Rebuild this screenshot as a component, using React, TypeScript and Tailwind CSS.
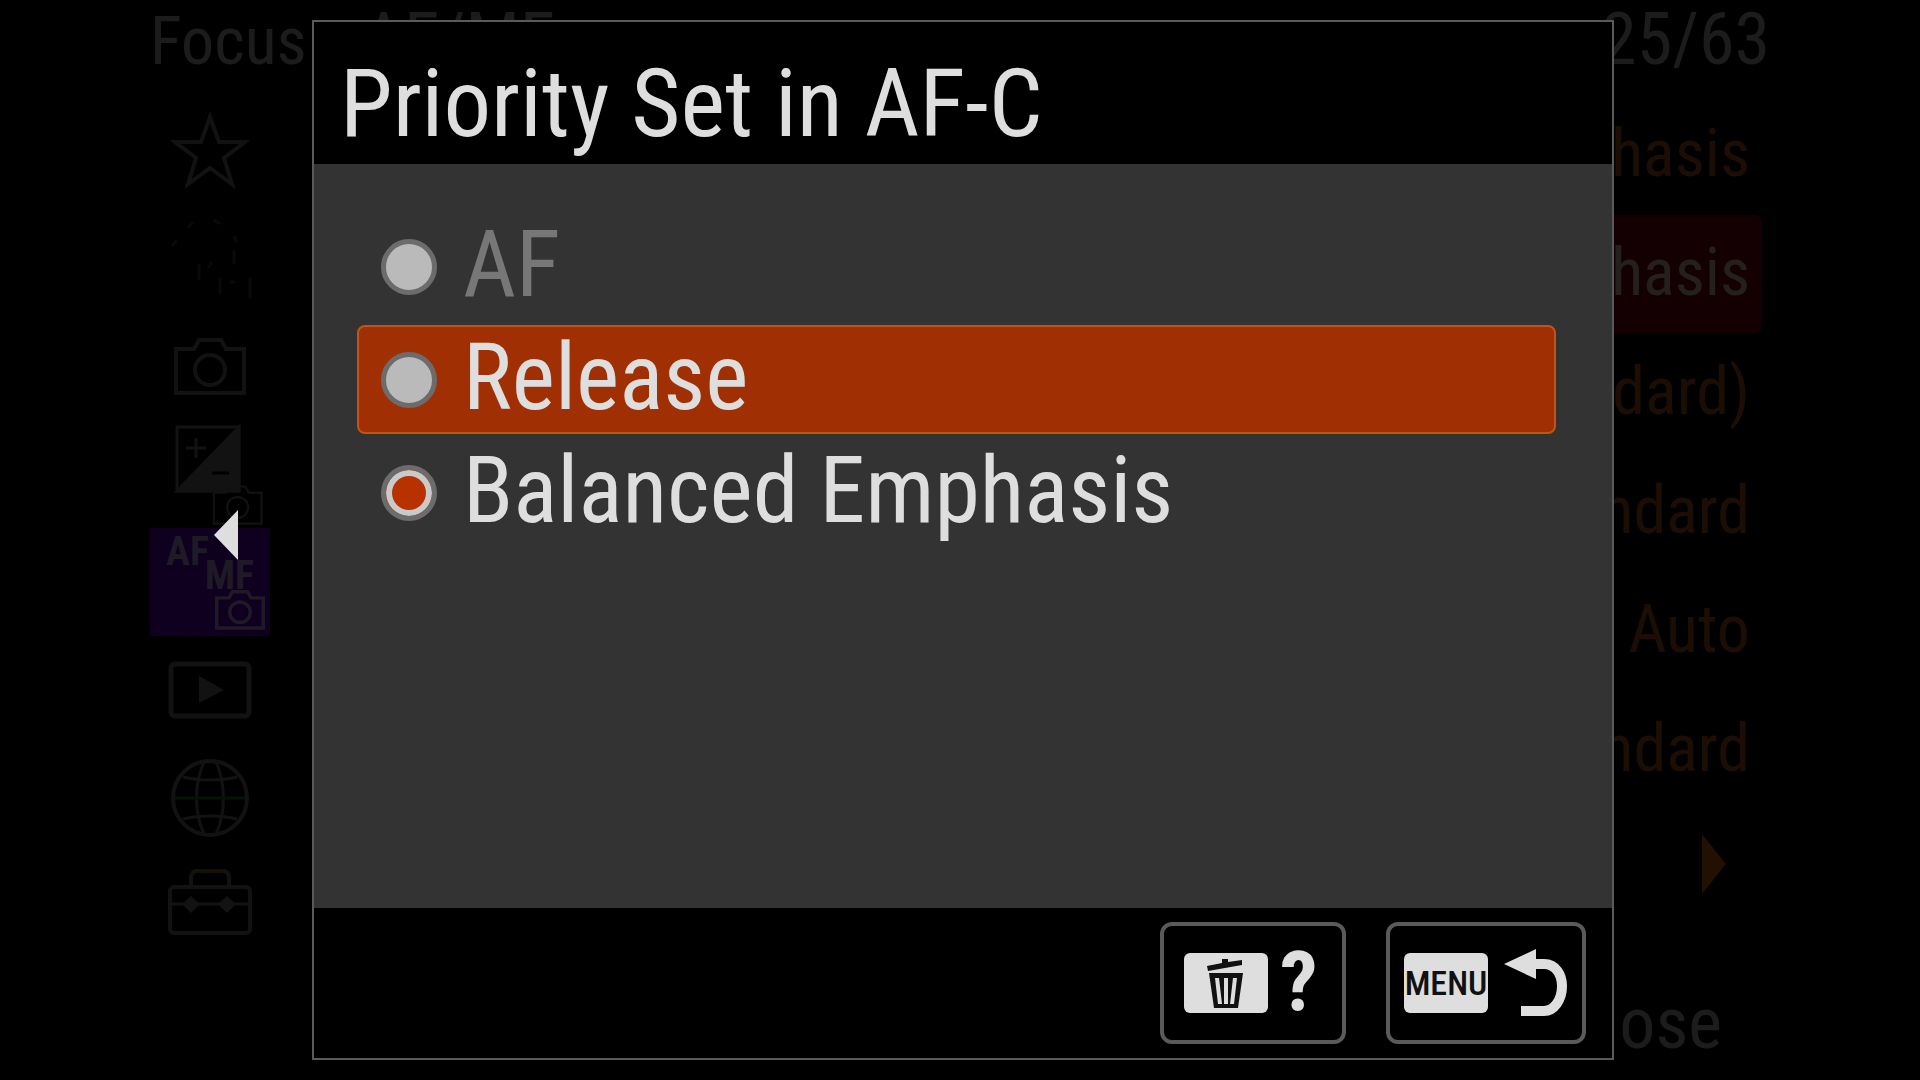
import { useState } from "react";
import type { ReactNode } from "react";

interface Option {
  id: string;
  label: string;
  disabled?: boolean;
}

const OPTIONS: Option[] = [
  { id: "af", label: "AF", disabled: true },
  { id: "release", label: "Release" },
  { id: "balanced", label: "Balanced Emphasis" },
];

const SETTINGS = [
  { id: "af-s", value: "Balanced Emphasis" },
  { id: "af-c", value: "Balanced Emphasis", active: true },
  { id: "transition", value: "5(Standard)" },
  { id: "sensitivity", value: "Standard" },
  { id: "illuminator", value: "Auto" },
  { id: "drive", value: "Standard" },
];

function CameraShape() {
  return (
    <>
      <path d="M4 14h18l5-9h22l5 9h18v44H4z" />
      <circle cx="38" cy="35" r="15" />
    </>
  );
}

function StarIcon() {
  return (
    <svg viewBox="0 0 78 76" className="w-[78px] h-[76px]" fill="none" stroke="#121212" strokeWidth="4">
      <path d="M39 5l9 25h26L53 46l8 26-22-16-22 16 8-26L4 30h26z" />
    </svg>
  );
}

function PeopleIcon() {
  return (
    <svg viewBox="0 0 84 84" className="w-[84px] h-[84px]" fill="none" stroke="#090909" strokeWidth="3">
      <path d="M4 30l5-6M20 12l5-6M46 4l6 4M66 20l3 6M66 34v14M31 48v16M52 62v16M62 66h5M82 62v20M44 46l-4 6" />
    </svg>
  );
}

function CameraIcon() {
  return (
    <svg viewBox="0 0 76 62" className="w-[76px] h-[62px]" fill="none" stroke="#121212" strokeWidth="4">
      <CameraShape />
    </svg>
  );
}

function ExposureIcon() {
  return (
    <svg viewBox="-18 0 112 104" className="w-[112px] h-[104px]" fill="none" stroke="#121212" strokeWidth="3">
      <path d="M5 5h62v64H5z" />
      <path d="M67 5v64H5z" fill="#121212" />
      <path d="M14 26h20M24 16v20" />
      <path d="M40 51h17" stroke="#000" />
      <g transform="translate(39 61) scale(0.7)">
        <CameraShape />
      </g>
    </svg>
  );
}

function FocusIcon() {
  return (
    <span className="grid content-start w-[120px] h-[108px] pt-3 pl-4 pr-1 bg-[#0e001e] text-[#1f1a26] text-[40px] leading-6 font-bold">
      <span className="text-left">AF</span>
      <span className="text-right pr-3">MF</span>
      <svg viewBox="0 0 76 62" className="w-[52px] h-[43px] justify-self-end" fill="none" stroke="#201a28" strokeWidth="5">
        <CameraShape />
      </svg>
    </span>
  );
}

function PlaybackIcon() {
  return (
    <svg viewBox="0 0 84 58" className="w-[84px] h-[58px]" fill="none" stroke="#121212" strokeWidth="5">
      <rect x="3" y="3" width="78" height="52" rx="4" />
      <path d="M31 15v27l25-13z" fill="#121212" stroke="none" />
    </svg>
  );
}

function GlobeIcon() {
  return (
    <svg viewBox="0 0 80 80" className="w-[80px] h-[80px]" fill="none" stroke="#121212" strokeWidth="3">
      <circle cx="40" cy="40" r="37" strokeWidth="4" />
      <path d="M34 4C24 26 24 54 34 76M46 4c10 22 10 50 0 72M13 19c16 4 38 4 54 0M13 61c16-4 38-4 54 0" />
      <path d="M5 40h70" stroke="#061206" />
    </svg>
  );
}

function ToolboxIcon() {
  return (
    <svg viewBox="0 0 86 76" className="w-[86px] h-[76px]" fill="none" stroke="#121212" strokeWidth="4">
      <rect x="3" y="19" width="80" height="46" rx="4" />
      <path d="M24 18V11q0-8 6-8h26q6 0 6 8v7" />
      <path d="M28 3h30" stroke="#141202" />
      <path d="M3 36h80" strokeWidth="3" />
      <path d="M24 28l9 8-9 9-9-9zM60 28l9 8-9 9-9-9z" fill="#121212" stroke="none" />
    </svg>
  );
}

const TABS: { id: string; label: string; icon: ReactNode }[] = [
  { id: "my", label: "My Menu", icon: <StarIcon /> },
  { id: "main", label: "Main", icon: <PeopleIcon /> },
  { id: "shooting", label: "Shooting", icon: <CameraIcon /> },
  { id: "exposure", label: "Exposure/Color", icon: <ExposureIcon /> },
  { id: "focus", label: "Focus", icon: <FocusIcon /> },
  { id: "playback", label: "Playback", icon: <PlaybackIcon /> },
  { id: "network", label: "Network", icon: <GlobeIcon /> },
  { id: "setup", label: "Setup", icon: <ToolboxIcon /> },
];

function TrashIcon() {
  return (
    <svg viewBox="0 0 84 60" className="shrink-0 w-[84px] h-[60px]">
      <rect width="84" height="60" rx="6" fill="#dedede" />
      <path d="M23 13l15-3V6h6v3l14-2v5L24 18z" fill="#111" />
      <path d="M25 20h34l-5 35H30z" fill="#111" />
      <path d="M31 25h4l3 26h-4zM40 25h4v26h-4zM49 25h4l-3 26h-4z" fill="#dedede" />
    </svg>
  );
}

function BackIcon() {
  return (
    <svg viewBox="0 0 64 68" className="shrink-0 w-[64px] h-[68px]">
      <path d="M0 15L32 0v30z" fill="#dedede" />
      <path d="M30 15h10c12 0 18 11 18 22 0 14-8 25-18 25H17" fill="none" stroke="#dedede" strokeWidth="10" />
    </svg>
  );
}

export default function App() {
  const [selected, setSelected] = useState("balanced");
  const [focused, setFocused] = useState("release");

  return (
    <div
      className="relative min-h-screen overflow-hidden bg-black"
      style={{ fontFamily: '"Roboto Condensed", Roboto, sans-serif' }}
    >
      <div className="flex flex-col min-h-screen px-[150px] text-[72px] leading-none text-[#1c1c1c]">
        <header className="flex items-baseline h-24 pt-1">
          <span className="text-[66px] leading-none">Focus</span>
          <span className="ml-14">AF/MF</span>
          <span className="ml-auto">25/63</span>
        </header>

        <div className="flex flex-1">
          <nav className="flex flex-col w-[120px]">
            {TABS.map((tab) => (
              <button key={tab.id} aria-label={tab.label} className="flex items-center justify-center h-[108px]">
                {tab.icon}
              </button>
            ))}
          </nav>

          <ul className="flex flex-col flex-1 ml-12 mr-2 text-[66px] leading-none text-right text-[#1c0e04]">
            {SETTINGS.map((item) => (
              <li
                key={item.id}
                className={`flex items-center justify-end h-[119px] pr-3 pb-1 rounded-lg ${
                  item.active ? "bg-[#140002] text-[#242020]" : ""
                }`}
              >
                {item.value}
              </li>
            ))}
            <li className="flex items-center justify-end h-[119px] pr-9 pb-3">
              <svg viewBox="0 0 24 60" className="w-6 h-[60px]">
                <path d="M0 0l24 30L0 60z" fill="#221003" />
              </svg>
            </li>
          </ul>
        </div>

        <footer className="flex justify-end pr-12 pb-5">Close</footer>
      </div>

      <svg viewBox="0 0 24 50" className="absolute left-[214px] top-[510px] w-6 h-[50px]">
        <path d="M24 0v50L0 25z" fill="#dedede" />
      </svg>

      <section
        role="dialog"
        aria-labelledby="dialog-title"
        className="absolute top-5 bottom-5 left-[312px] right-[306px] flex flex-col border-2 border-[#5a5a5a] bg-black text-[#dedede]"
      >
        <h1 id="dialog-title" className="flex items-center h-[142px] pl-[26px] pt-5 text-[95px] leading-none whitespace-nowrap">
          Priority Set in AF-C
        </h1>

        <div className="flex flex-col flex-1 gap-1 pl-[43px] pr-14 pt-12 bg-[#333]">
          {OPTIONS.map((option) => (
            <label
              key={option.id}
              onMouseEnter={() => !option.disabled && setFocused(option.id)}
              className={`flex items-center gap-[26px] h-[109px] pl-[22px] border-2 rounded-lg text-[92px] leading-none ${
                focused === option.id ? "bg-[#a03003] border-[#c4540e]" : "border-transparent"
              } ${option.disabled ? "text-[#777]" : ""}`}
            >
              <input
                type="radio"
                name="priority"
                checked={selected === option.id}
                disabled={option.disabled}
                onChange={() => setSelected(option.id)}
                className="appearance-none shrink-0 size-14 rounded-full border-5 border-[#6c6c6c] bg-[#bababa] checked:bg-[#b83200] checked:shadow-[inset_0_0_0_6px_#cacaca]"
              />
              <span className="pb-1">{option.label}</span>
            </label>
          ))}
        </div>

        <footer className="flex items-center justify-end gap-10 h-[150px] pr-[26px]">
          <button aria-label="Help" className="flex items-center gap-3 w-[186px] h-[122px] pl-5 border-4 border-[#5a5a5a] rounded-xl">
            <TrashIcon />
            <span className="text-[84px] leading-none font-bold">?</span>
          </button>
          <button aria-label="Back" className="flex items-center gap-4 w-[200px] h-[122px] pl-[14px] border-4 border-[#5a5a5a] rounded-xl">
            <span className="flex items-center justify-center w-[84px] h-[60px] rounded-md bg-[#dedede] text-[#111] text-[34px] leading-none font-medium">
              MENU
            </span>
            <BackIcon />
          </button>
        </footer>
      </section>
    </div>
  );
}
